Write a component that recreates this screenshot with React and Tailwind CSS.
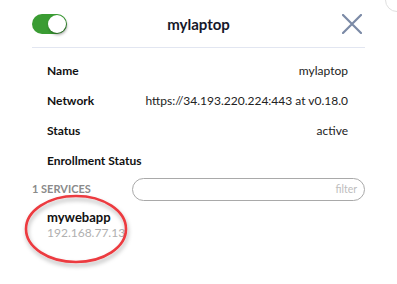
export default function App() {
    const rows = [
        { label: "Name", value: "mylaptop" },
        { label: "Network", value: "https://34.193.220.224:443 at v0.18.0" },
        { label: "Status", value: "active" },
        { label: "Enrollment Status", value: "" },
    ];

    return (
        <div
            className="relative w-[397px] h-[284px] bg-white overflow-hidden text-[#111]"
            style={{ fontFamily: 'Lato, "Open Sans", "Liberation Sans", sans-serif' }}
        >
            {/* header */}
            <div className="mx-[32px] h-[48px] pt-[1px] grid grid-cols-[1fr_auto_1fr] items-center border-b border-[#e2e6f1]">
                <div className="justify-self-start relative w-[35px] h-[20px] rounded-full bg-[#3a9c33]">
                    <div className="absolute right-[1px] top-[1px] w-[18px] h-[18px] rounded-full bg-white shadow-[1px_2px_3px_rgba(0,0,0,0.35)]" />
                </div>
                <div className="text-[15px] font-bold text-[#16182a]">mylaptop</div>
                <svg width="20" height="20" viewBox="0 0 20 20" className="justify-self-end mr-[3px]">
                    <path d="M1 1 L19 19 M19 1 L1 19" stroke="#7b8aa6" strokeWidth="2.2" strokeLinecap="round" />
                </svg>
            </div>

            {/* details */}
            <div className="w-[301px] ml-[47px] pt-[8px] flex flex-col">
                {rows.map((r) => (
                    <div key={r.label} className="h-[30px] flex items-center justify-between">
                        <span className="text-[12px] font-bold text-[#111]">{r.label}</span>
                        <span className="text-[12px] text-[#222]">{r.value}</span>
                    </div>
                ))}
            </div>

            {/* services */}
            <div className="mx-[32px] mt-[2px] flex items-center">
                <span className="w-[100px] text-[11px] font-bold text-[#8a8a8a]">1 SERVICES</span>
                <div className="flex-1 h-[23px] rounded-full border border-[#a9a9a9] flex items-center justify-end pr-[7px]">
                    <span className="text-[10.5px] text-[#bdbdbd]">filter</span>
                </div>
            </div>

            <div className="ml-[47px] mt-[8px] w-[78px] overflow-hidden whitespace-nowrap">
                <div className="text-[13px] font-bold leading-[16px] text-[#111]">mywebapp</div>
                <div className="text-[12px] leading-[15px] text-[#b0b0b0]">192.168.77.13:80</div>
            </div>

            {/* annotation */}
            <svg className="absolute left-[20px] top-[189px]" width="115" height="82" viewBox="0 0 115 82">
                <defs>
                    <filter id="sh" x="-20%" y="-20%" width="140%" height="150%">
                        <feDropShadow dx="1" dy="3" stdDeviation="2" floodColor="#000" floodOpacity="0.3" />
                    </filter>
                </defs>
                <ellipse cx="56" cy="40" rx="50" ry="33" fill="none" stroke="#ec3a3f" strokeWidth="2.6" filter="url(#sh)" />
            </svg>

            {/* corner hint */}
            <div className="absolute -right-[12px] -top-[12px] w-[24px] h-[24px] rounded-full border border-[#e0e0e0]" />
        </div>
    );
}
